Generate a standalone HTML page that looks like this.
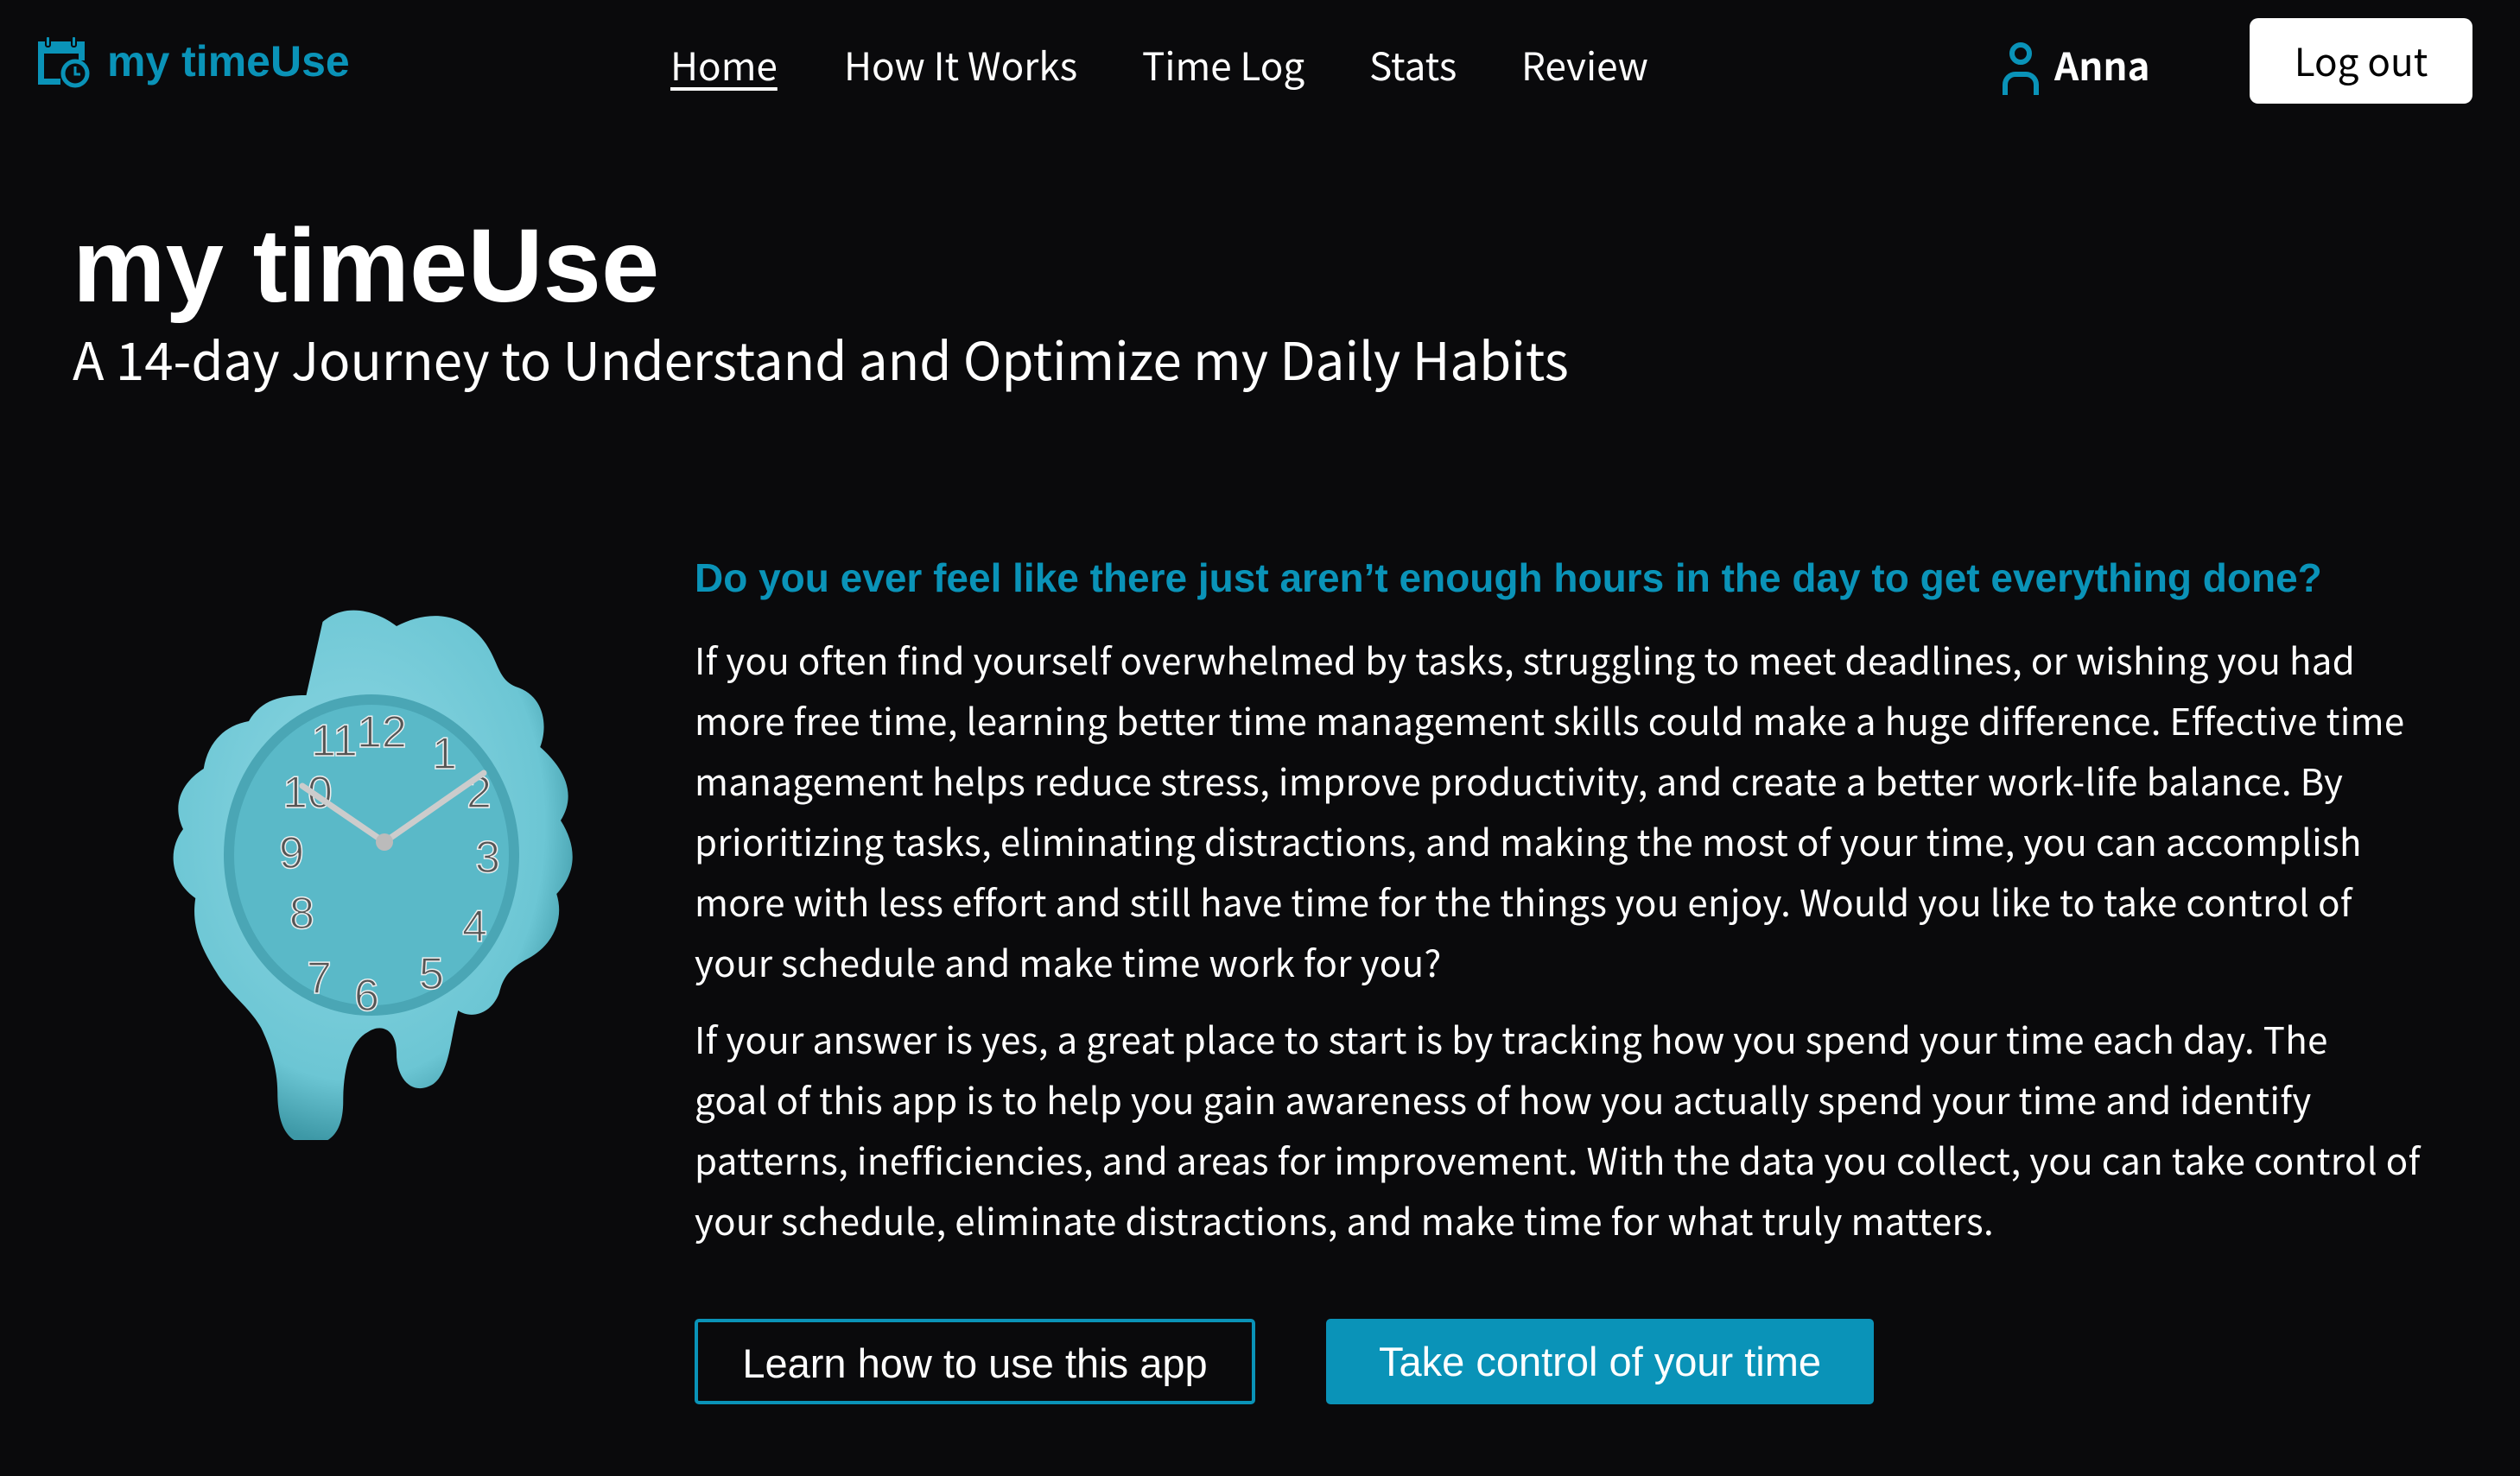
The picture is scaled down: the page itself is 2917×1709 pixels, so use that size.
<!DOCTYPE html>
<html><head><meta charset="utf-8"><style>
*{margin:0;padding:0;box-sizing:border-box}
html,body{width:2917px;height:1709px;background:#0a0a0c;overflow:hidden;color:#fff;font-family:"Noto Sans CJK JP","Liberation Sans",sans-serif}
.abs{position:absolute;white-space:nowrap}
.nav{font-size:44px;top:44px;line-height:60px;color:#fff}
.logo{left:124px;top:36px;font-size:50px;font-weight:700;color:#0a93b8;font-family:"Liberation Sans",sans-serif;line-height:70px}
.h1{left:84px;top:232px;font-size:121px;font-weight:700;font-family:"Liberation Sans",sans-serif;line-height:150px}
.sub{left:84px;top:375px;font-size:60px;line-height:80px}
.q{left:804px;top:638px;font-size:46px;font-weight:700;color:#0a93b8;font-family:"Liberation Sans",sans-serif;line-height:62px}
.p{left:804px;font-size:42px;line-height:70px;letter-spacing:0.35px}
.btn{position:absolute;top:1527px;height:99px;font-size:47px;line-height:95px;text-align:center;border-radius:5px;font-family:"Liberation Sans",sans-serif}
</style></head><body>
<svg class="abs" style="left:41px;top:40px" width="64" height="62" viewBox="0 0 64 62">
<rect x="3" y="8" width="54" height="14" fill="#0a93b8"/>
<rect x="3" y="8" width="7" height="50" fill="#0a93b8"/>
<rect x="3" y="51" width="26" height="7" fill="#0a93b8"/>
<rect x="50" y="8" width="7" height="22" fill="#0a93b8"/>
<rect x="12" y="2" width="5" height="12" rx="2" fill="#0a93b8" stroke="#0a0a0c" stroke-width="2"/>
<rect x="42" y="2" width="5" height="12" rx="2" fill="#0a93b8" stroke="#0a0a0c" stroke-width="2"/>
<circle cx="46" cy="45" r="14" fill="#0a0a0c" stroke="#0a93b8" stroke-width="5"/>
<path d="M46 37v9h6" stroke="#0a93b8" stroke-width="3" fill="none"/>
</svg>
<div class="abs logo">my timeUse</div>
<div class="abs nav" style="left:776px;text-decoration:underline;text-underline-offset:8px">Home</div>
<div class="abs nav" style="left:977px">How It Works</div>
<div class="abs nav" style="left:1322px">Time Log</div>
<div class="abs nav" style="left:1585px">Stats</div>
<div class="abs nav" style="left:1761px">Review</div>
<svg class="abs" style="left:2317px;top:48px" width="44" height="64" viewBox="0 0 44 64">
<circle cx="22" cy="14" r="10" fill="none" stroke="#0a93b8" stroke-width="6"/>
<path d="M4 62V50a12 12 0 0 1 12-12h12a12 12 0 0 1 12 12v12" fill="none" stroke="#0a93b8" stroke-width="6"/>
</svg>
<div class="abs nav" style="left:2378px;font-weight:700">Anna</div>
<div class="abs" style="left:2604px;top:21px;width:258px;height:99px;background:#fff;border-radius:10px;color:#000;font-size:44px;line-height:97px;text-align:center">Log out</div>
<div class="abs h1">my timeUse</div>
<div class="abs sub">A 14-day Journey to Understand and Optimize my Daily Habits</div>
<svg class="abs" style="left:190px;top:690px" width="500" height="630" viewBox="0 0 500 630">
<defs><radialGradient id="g" cx="45%" cy="40%" r="60%"><stop offset="0" stop-color="#8ed7e3"/><stop offset="0.8" stop-color="#6cc6d4"/><stop offset="1" stop-color="#3d98a6"/></radialGradient></defs>
<g transform="translate(22,0) scale(0.95,1)">
<path d="M170 30c30-25 70-10 90 5 30-15 70-20 100 10 25 25 20 50 45 60 35 10 40 45 30 70 30 25 45 55 25 85 20 30 20 60-5 85 10 30-5 60-35 75-20 10-30 20-35 40-10 25-35 30-50 20-10 35-10 70-30 85-25 15-45-5-45-35 0-30-20-35-35-25-20 10-30 40-30 80 0 35-15 50-40 50-30 0-40-25-40-60 0-30-10-55-20-75-15-25-40-40-55-65-20-30-30-55-25-85-30-20-35-55-15-80-15-30 0-55 25-70 5-30 25-50 55-55 15-25 40-30 70-30z" fill="url(#g)"/>
</g>
<ellipse cx="240" cy="300" rx="165" ry="180" fill="#5ab9c8" stroke="#4aa6b5" stroke-width="12"/>
<g fill="#555" stroke="#eee" stroke-width="1.5" font-family="Liberation Sans,sans-serif" font-size="52">
<text x="170" y="185">11</text><text x="223" y="175">12</text><text x="310" y="200">1</text><text x="350" y="245">2</text>
<text x="360" y="320">3</text><text x="345" y="400">4</text><text x="295" y="455">5</text><text x="220" y="480">6</text>
<text x="165" y="460">7</text><text x="145" y="385">8</text><text x="133" y="315">9</text><text x="137" y="245">10</text></g>
<path d="M160 220L255 285M255 285L370 205" stroke="#ccc" stroke-width="7" stroke-linecap="round"/>
<circle cx="255" cy="285" r="10" fill="#bbb"/>
</svg>
<div class="abs q">Do you ever feel like there just aren’t enough hours in the day to get everything done?</div>
<div class="abs p" style="top:729px">If you often find yourself overwhelmed by tasks, struggling to meet deadlines, or wishing you had<br>more free time, learning better time management skills could make a huge difference. Effective time<br>management helps reduce stress, improve productivity, and create a better work-life balance. By<br>prioritizing tasks, eliminating distractions, and making the most of your time, you can accomplish<br>more with less effort and still have time for the things you enjoy. Would you like to take control of<br>your schedule and make time work for you?</div>
<div class="abs p" style="top:1168px">If your answer is yes, a great place to start is by tracking how you spend your time each day. The<br>goal of this app is to help you gain awareness of how you actually spend your time and identify<br>patterns, inefficiencies, and areas for improvement. With the data you collect, you can take control of<br>your schedule, eliminate distractions, and make time for what truly matters.</div>
<div class="btn" style="left:804px;width:649px;border:4px solid #0a93b8;color:#fff">Learn how to use this app</div>
<div class="btn" style="left:1535px;width:634px;background:#0a93b8;color:#fff;line-height:99px">Take control of your time</div>
</body></html>
